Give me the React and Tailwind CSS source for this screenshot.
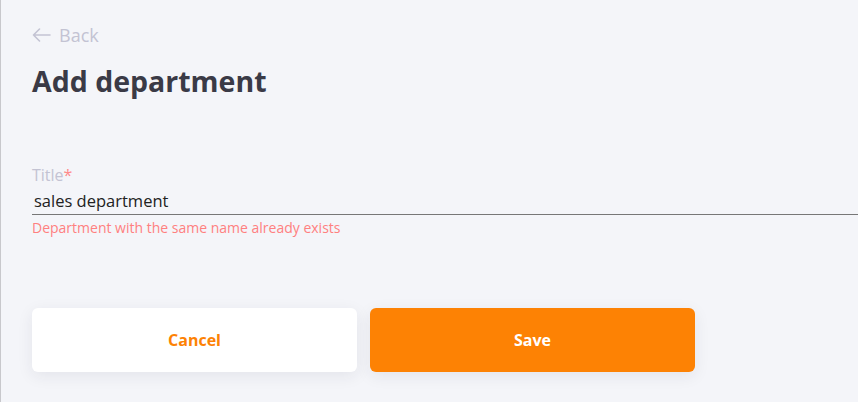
export default function App() {
  return (
    <div
      className="min-h-screen h-[402px] bg-[#f4f5f9] border-l border-[#c8c8cc] pl-[31px] pt-[22px] overflow-hidden"
      style={{ fontFamily: '"Open Sans", "Noto Sans", sans-serif' }}
    >
      <button className="flex items-center gap-[8px] text-[#c3c3d3] text-[18px] leading-[26px]">
        <svg width="19" height="14" viewBox="0 0 19 14" fill="none" stroke="#c3c3d3" strokeWidth="1.6" strokeLinecap="round" strokeLinejoin="round">
          <path d="M18 7H1.5M7.5 1L1.5 7l6 6" />
        </svg>
        Back
      </button>

      <h1 className="mt-[15px] text-[28.5px] font-bold leading-[36px] text-[#3a3a46]">
        Add department
      </h1>

      <div className="mt-[65px]">
        <label className="block text-[16px] leading-[22px] text-[#c3c3d3]">
          Title<span className="text-[#ff8a8a]">*</span>
        </label>
        <input
          defaultValue="sales department"
          className="block w-full bg-transparent border-b border-[#777] pl-[2px] pt-[2px] pb-[1px] text-[16.5px] leading-[25px] text-[#222] outline-none"
        />
        <p className="mt-[3px] text-[14px] leading-[20px] text-[#ff8080]">
          Department with the same name already exists
        </p>
      </div>

      <div className="mt-[70px] flex gap-[13px]">
        <button className="w-[325px] h-[64px] rounded-[6px] bg-white text-[#fd8204] text-[16px] font-bold shadow-[0_4px_16px_rgba(40,40,70,0.08)]">
          Cancel
        </button>
        <button className="w-[325px] h-[64px] rounded-[6px] bg-[#fd8204] text-white text-[16px] font-bold shadow-[0_4px_16px_rgba(40,40,70,0.08)]">
          Save
        </button>
      </div>
    </div>
  );
}
